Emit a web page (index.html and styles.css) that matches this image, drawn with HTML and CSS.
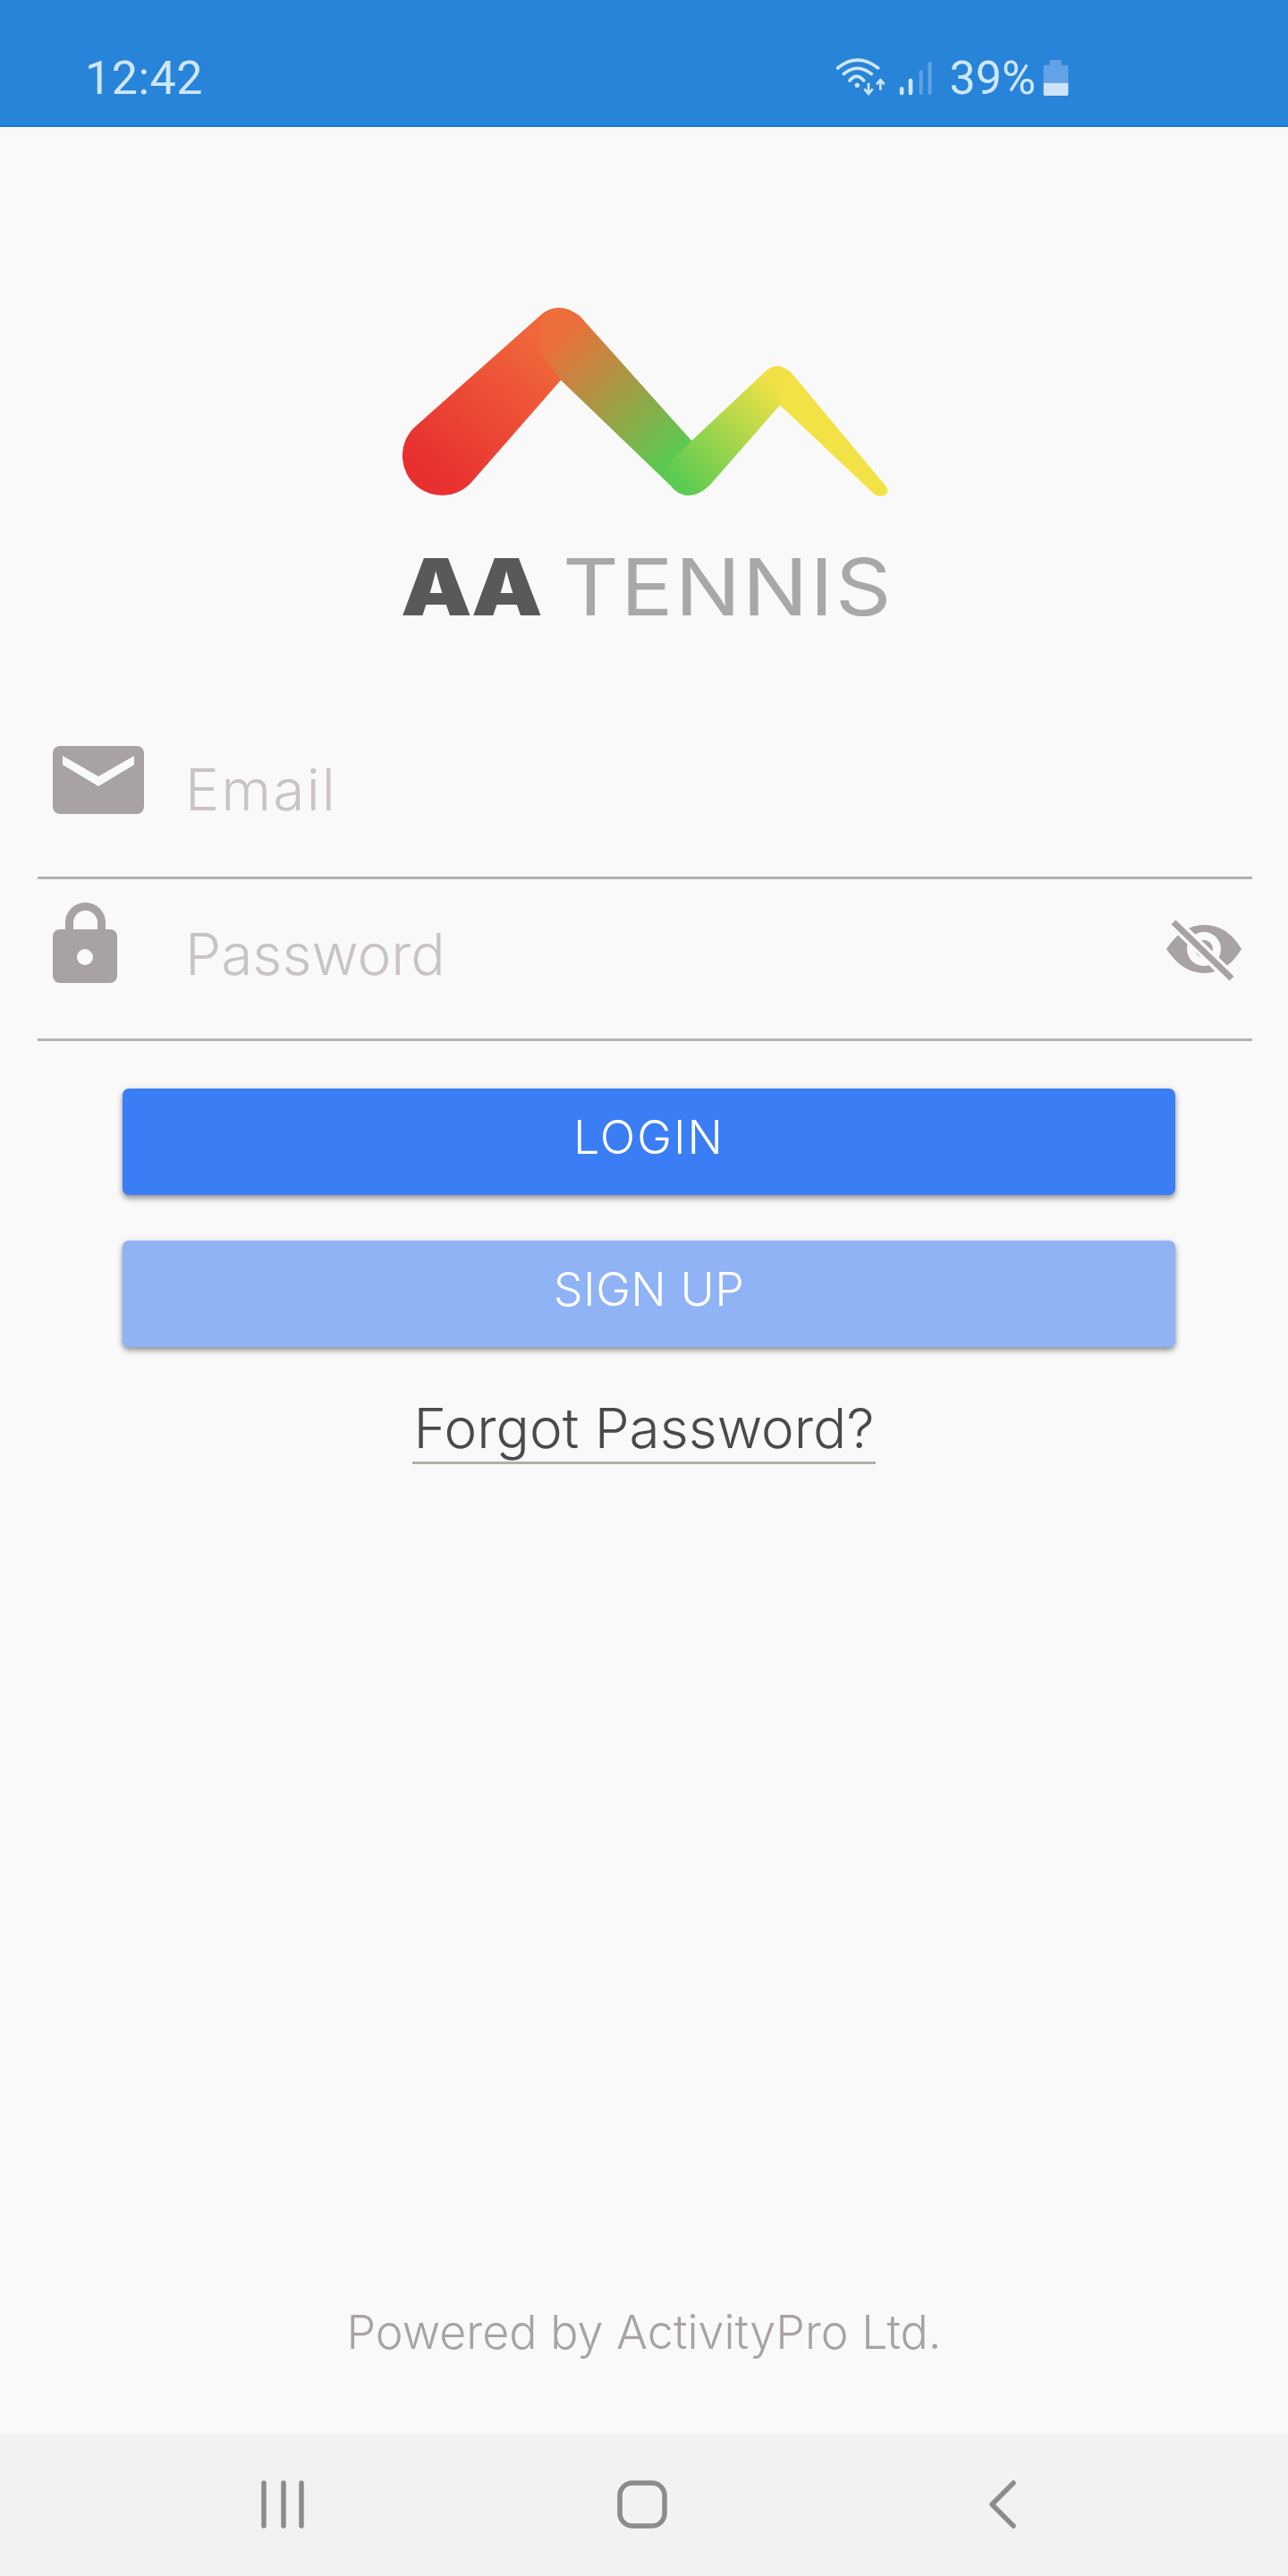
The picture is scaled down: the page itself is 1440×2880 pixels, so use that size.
FILE: index.html

```html
<!DOCTYPE html>
<html lang="en">
  <head>
    <meta charset="UTF-8" />
    <meta name="viewport" content="width=device-width, initial-scale=1.0" />
    <title>AA Tennis</title>
    <link rel="stylesheet" href="styles.css">
  </head>

  <body>
    <div class="phone">
      <!-- status bar -->
      <div class="status-bar">
        <span class="clock">12:42</span>
        <div class="status-icons">
          <svg class="icon-wifi" viewBox="0 0 225 165">
            <path d="M35 48Q100 -5 170 48M55 68Q100 30 148 68M75 90Q98 62 122 90" fill="none" stroke="#cfe6fa" stroke-width="11" stroke-linecap="round" />
            <circle cx="100" cy="106" r="8" fill="#cfe6fa" />
            <path d="M138 98V130M124 118L138 135L152 118M178 122V92M165 103L178 88L191 103" fill="none" stroke="#cfe6fa" stroke-width="8" />
          </svg>
          <svg class="icon-signal" viewBox="316 85 114 118">
            <path d="M325 180V194M355 152V194" stroke="#cfe6fa" stroke-width="14" stroke-linecap="round" />
            <path d="M390 122V194M420 94V194" stroke="#62a2e6" stroke-width="12" stroke-linecap="round" />
          </svg>
          <span class="battery-text">39%</span>
          <svg class="icon-battery" viewBox="800 80 87 120">
            <path d="M823 97V84Q823 80 827 80H858Q862 80 862 84V97H880Q885 97 885 102V157H802V102Q802 97 807 97Z" fill="#62a2e6" />
            <path d="M802 157H885V195Q885 200 880 200H807Q802 200 802 195Z" fill="#cfe3f8" />
          </svg>
        </div>
      </div>

      <div class="content">
        <!-- logo -->
        <div class="logo">
          <svg class="logo-mark" viewBox="450 343 544 212">
            <defs>
              <linearGradient id="seg1" gradientUnits="userSpaceOnUse" x1="490" y1="535" x2="620" y2="390">
                <stop offset="0" stop-color="#e83030" />
                <stop offset="1" stop-color="#f0683a" />
              </linearGradient>
              <linearGradient id="seg2" gradientUnits="userSpaceOnUse" x1="625" y1="375" x2="752" y2="510">
                <stop offset="0" stop-color="#ec6e3a" />
                <stop offset="1" stop-color="#5cc850" />
              </linearGradient>
              <linearGradient id="seg3" gradientUnits="userSpaceOnUse" x1="755" y1="535" x2="862" y2="425">
                <stop offset="0" stop-color="#5ccb52" />
                <stop offset="1" stop-color="#f1e146" />
              </linearGradient>
            </defs>
            <path fill="url(#seg1)" d="M462 479L606 351L640 380L627 425L529 537A44.350 44.350 0 1 1 462 479Z" />
            <path fill="url(#seg2)" d="M606 351Q625 336 648 353L778 498L755 548L627 425L604 393Z" />
            <path fill="#f3e245" d="M856 415Q870 403 885 417L990 543Q995 550 990 553Q984 557 977 552L872 453L850 430Z" />
            <path fill="url(#seg3)" d="M773 493L856 415Q866 407 874 410L872 453L793 543Q771 563 753 547Q745 535 749 517Z" />
          </svg>
          <div class="logo-text"><span class="logo-aa">AA</span><span class="logo-tennis">TENNIS</span></div>
        </div>

        <!-- login form -->
        <div class="form">
          <div class="field">
            <svg class="field-icon icon-mail" viewBox="59 833 102 76">
              <rect x="59" y="833" width="102" height="76" rx="8" fill="#a8a2a3" />
              <path d="M70 844L110 867L150 844V854L110 878L70 854Z" fill="#f9f9f9" />
            </svg>
            <span class="field-label label-email">Email</span>
          </div>
          <div class="field">
            <svg class="field-icon icon-lock" viewBox="59 1008 72 90">
              <path d="M77.500 1040V1030.500A18 18 0 0 1 113.500 1030.500V1040" fill="none" stroke="#a8a2a3" stroke-width="9" />
              <rect x="59" y="1038" width="72" height="60" rx="8" fill="#a8a2a3" />
              <circle cx="95" cy="1069" r="9" fill="#f9f9f9" />
            </svg>
            <span class="field-label label-password">Password</span>
            <svg class="icon-eye" viewBox="1304 1026 84 70">
              <path d="M1304 1060Q1322 1033 1346 1033Q1372 1033 1388 1060Q1372 1087 1346 1087Q1322 1087 1304 1060Z" fill="#a8a2a3" />
              <circle cx="1346" cy="1060" r="19" fill="#f9f9f9" />
              <circle cx="1346" cy="1060" r="10" fill="#a8a2a3" />
              <path d="M1306 1024L1383 1099" stroke="#f9f9f9" stroke-width="14" />
              <path d="M1312 1030L1377 1093" stroke="#a8a2a3" stroke-width="7" />
            </svg>
          </div>
          <a class="btn btn-login">LOGIN</a>
          <a class="btn btn-signup">SIGN UP</a>
          <div class="forgot-row"><a class="forgot">Forgot Password?</a></div>
        </div>

        <p class="powered">Powered by ActivityPro Ltd.</p>
      </div>

      <!-- android nav bar -->
      <div class="nav-bar">
        <svg class="nav-recent" viewBox="0 0 52 54">
          <path d="M3 3V51M25 3V51M45 3V51" stroke="#8c8c8c" stroke-width="5.500" stroke-linecap="round" />
        </svg>
        <svg class="nav-home" viewBox="0 0 56 54">
          <rect x="3" y="3" width="50" height="48" rx="14" fill="none" stroke="#8c8c8c" stroke-width="5.500" />
        </svg>
        <svg class="nav-back" viewBox="0 0 32 54">
          <path d="M28 3L4 27L28 51" fill="none" stroke="#8c8c8c" stroke-width="5.500" stroke-linecap="round" stroke-linejoin="round" />
        </svg>
      </div>
    </div>
  </body>
</html>
```

FILE: styles.css

```css
* {
  box-sizing: border-box;
}

body {
  margin: 0;
  padding: 0;
  background: #f9f9f9;
  font-family: "Inter", "Liberation Sans", sans-serif;
}

.phone {
  width: 1440px;
  height: 2880px;
  display: flex;
  flex-direction: column;
  overflow: hidden;
}

/* status bar */
.status-bar {
  height: 142px;
  flex: none;
  background: #2784d8;
  border-bottom: 2px solid #1f78c8;
  color: #cfe6fa;
  font-family: "Roboto", sans-serif;
  font-size: 52px;
  font-weight: 400;
  display: flex;
  align-items: flex-start;
  padding: 58px 245px 0 95px;
}

.clock {
  line-height: 60px;
  letter-spacing: 0.5px;
}

.status-icons {
  margin-left: auto;
  display: flex;
  align-items: flex-start;
}

.icon-wifi {
  width: 75px;
  height: 55px;
  margin: 2px 5px 0 0;
}

.icon-signal {
  width: 38px;
  height: 39px;
  margin: 10px 18px 0 0;
}

.battery-text {
  line-height: 60px;
  margin-right: 8px;
}

.icon-battery {
  width: 29px;
  height: 40px;
  margin-top: 9px;
}

/* main area */
.content {
  flex: 1;
  display: flex;
  flex-direction: column;
}

.logo {
  margin-top: 201px;
  display: flex;
  flex-direction: column;
  align-items: flex-start;
  padding-left: 448px;
}

.logo-mark {
  width: 544px;
  height: 212px;
  margin-left: 2px;
}

.logo-text {
  margin-top: 57px;
  font-size: 88px;
  line-height: 88px;
  display: flex;
  white-space: nowrap;
}

.logo-aa {
  width: 181px;
  font-weight: 900;
  color: #58595b;
  letter-spacing: -2px;
  transform: scaleX(1.14);
  transform-origin: left center;
}

.logo-tennis {
  font-weight: 400;
  color: #a7a8aa;
  letter-spacing: 2px;
  transform: scaleX(1.105);
  transform-origin: left center;
}

.form {
  display: flex;
  flex-direction: column;
  margin-top: 102px;
}

.field {
  height: 181px;
  margin: 0 40px 0 42px;
  padding-left: 17px;
  border-bottom: 3px solid #b5b0b1;
  display: flex;
  align-items: flex-start;
}

.field-icon {
  flex: none;
}

.icon-mail {
  width: 102px;
  height: 76px;
  margin-top: 32px;
}

.icon-lock {
  width: 72px;
  height: 90px;
  margin-top: 26px;
}

.field-label {
  font-size: 64px;
  font-weight: 300;
  line-height: 80px;
  color: #c9c3c5;
}

.label-email {
  margin: 41px 0 0 46px;
  letter-spacing: 2.200px;
}

.label-password {
  margin: 44px 0 0 76px;
}

.icon-eye {
  width: 84px;
  height: 70px;
  margin: 44px 12px 0 auto;
}

.btn {
  display: block;
  width: 1177px;
  height: 119px;
  margin-left: 137px;
  border-radius: 7px;
  color: #ffffff;
  font-size: 52px;
  font-weight: 300;
  line-height: 110px;
  text-align: center;
  box-shadow: 0 4px 6px rgba(0, 0, 0, 0.38), 0 0 8px rgba(0, 0, 0, 0.08);
}

.btn-login {
  margin-top: 53px;
  background: #3a7df4;
  letter-spacing: 2px;
}

.btn-signup {
  margin-top: 51px;
  background: #8fb3f5;
  letter-spacing: 0.5px;
}

.forgot-row {
  display: flex;
  justify-content: center;
  margin-top: 53px;
}

.forgot {
  font-size: 62px;
  font-weight: 300;
  line-height: 75px;
  color: #4a4a4a;
  border-bottom: 3px solid #b2afa9;
  padding: 0 2px;
}

.powered {
  margin: auto 0 83px;
  text-align: center;
  font-size: 52px;
  font-weight: 300;
  line-height: 60px;
  color: #a8a2a3;
}

/* nav bar */
.nav-bar {
  height: 159px;
  flex: none;
  background: #f2f2f2;
  display: flex;
  align-items: center;
  padding: 0 0 2px 292px;
}

.nav-recent {
  width: 52px;
  height: 54px;
}

.nav-home {
  width: 56px;
  height: 54px;
  margin-left: 346px;
}

.nav-back {
  width: 32px;
  height: 54px;
  margin-left: 359px;
}
```
